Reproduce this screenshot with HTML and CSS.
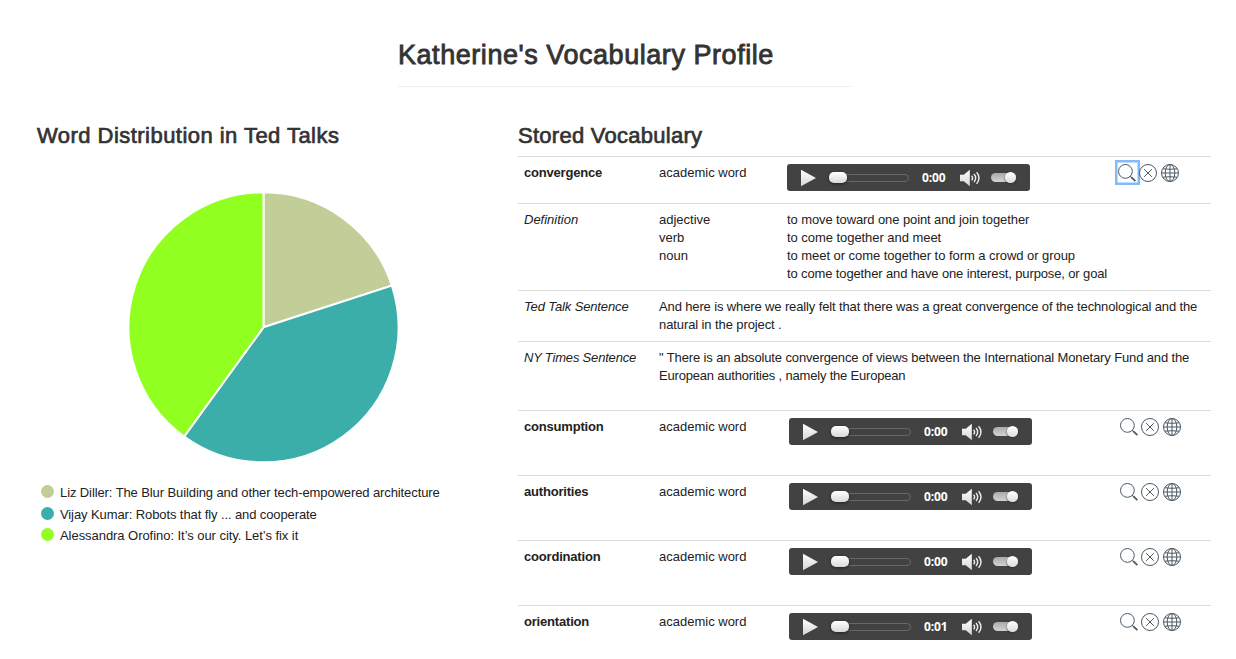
FILE: index.html
```html
<!DOCTYPE html>
<html lang="en">
<head>
<meta charset="utf-8">
<title>Katherine's Vocabulary Profile</title>
<link rel="stylesheet" href="styles.css">
</head>
<body>
<svg class="defs" aria-hidden="true">
  <defs>
    <linearGradient id="knob" x1="0" y1="0" x2="0" y2="1"><stop offset="0" stop-color="#fff"/><stop offset="1" stop-color="#d6d6d6"/></linearGradient>
    <symbol id="play" viewBox="0 0 16 18"><path d="M1 .8v16.4L16 9z" fill="url(#knob)"/></symbol>
    <symbol id="speaker" viewBox="0 0 22 18">
      <path d="M1 5.8h3.8L10.8.8v16.4l-6-5H1z" fill="url(#knob)"/>
      <path d="M12.6 6.7q2 2.3 0 4.6M15 5q3.4 4 0 8M17.6 3.3q4.8 5.7 0 11.4" fill="none" stroke="#eee" stroke-width="1.4"/>
    </symbol>
    <symbol id="search" viewBox="0 0 20 20"><circle cx="8.4" cy="8.4" r="6.9"/><path d="M13 13.2l2 1.8"/><path d="M14.2 14.2l4.2 4" stroke-width="1.8"/></symbol>
    <symbol id="close" viewBox="0 0 20 20"><circle cx="10" cy="10" r="8.5"/><path d="M6.1 6.1l7.8 7.8M13.9 6.1l-7.8 7.8"/></symbol>
    <symbol id="globe" viewBox="0 0 20 20"><circle cx="10" cy="10" r="8.5"/><ellipse cx="10" cy="10" rx="4.8" ry="8.5"/><path d="M10 1.4v17.2M1.4 10h17.2M2.8 5.8q7.2 1 14.4 0M2.8 14.2q7.2-1 14.4 0"/></symbol>
  </defs>
</svg>
<header class="page-header"><h1>Katherine's Vocabulary Profile</h1></header>
<main class="columns">
  <section class="chart">
    <h2 class="chart-title">Word Distribution in Ted Talks</h2>
    <svg class="pie" viewBox="-134.5 -134.3 270 270">
      <path d="M0 0V-135A135 135 0 0 1 128.39 -41.72Z" fill="#c1ce98"/>
      <path d="M0 0L128.39 -41.72A135 135 0 0 1 -79.35 109.22Z" fill="#3caea9"/>
      <path d="M0 0L-79.35 109.22A135 135 0 0 1 0 -135Z" fill="#91ff1f"/>
    </svg>
    <ul class="legend">
      <li><i class="dot sand"></i><span class="snug">Liz Diller: The Blur Building and other tech-empowered architecture</span></li>
      <li><i class="dot teal"></i><span class="snug second">Vijay Kumar: Robots that fly ... and cooperate</span></li>
      <li><i class="dot lime"></i><span class="slight">Alessandra Orofino: It’s our city. Let’s fix it</span></li>
    </ul>
  </section>
  <section class="vocab">
    <h2 class="vocab-title">Stored Vocabulary</h2>
    <div class="row word first">
      <b>convergence</b><span>academic word</span>
      <div class="player"><svg class="play"><use href="#play"/></svg><span class="track"><i></i></span><span class="time">0:00</span><svg class="speaker"><use href="#speaker"/></svg><span class="volume"><i></i></span></div>
      <div class="actions"><span class="icon focus"><svg><use href="#search"/></svg></span><svg><use href="#close"/></svg><svg><use href="#globe"/></svg></div>
    </div>
    <div class="row">
      <em>Definition</em>
      <span>adjective<br>verb<br>noun</span>
      <span class="meaning"><span class="snug">to move toward one point and join together</span><br><span class="slight">to come together and meet</span><br><span class="slight">to meet or come together to form a crowd or group</span><br><span class="tight">to come together and have one interest, purpose, or goal</span></span>
    </div>
    <div class="row">
      <em class="tight">Ted Talk Sentence</em>
      <span class="sentence"><span class="tight">And here is where we really felt that there was a great convergence of the technological and the</span><br><span class="snug">natural in the project .</span></span>
    </div>
    <div class="row last-detail">
      <em class="tighter">NY Times Sentence</em>
      <span class="sentence"><span class="tight">" There is an absolute convergence of views between the International Monetary Fund and the</span><br><span class="tighter">European authorities , namely the European</span></span>
    </div>
    <div class="row word">
      <b>consumption</b><span>academic word</span>
      <div class="player"><svg class="play"><use href="#play"/></svg><span class="track"><i></i></span><span class="time">0:00</span><svg class="speaker"><use href="#speaker"/></svg><span class="volume"><i></i></span></div>
      <div class="actions"><span class="icon"><svg><use href="#search"/></svg></span><svg><use href="#close"/></svg><svg><use href="#globe"/></svg></div>
    </div>
    <div class="row word">
      <b>authorities</b><span>academic word</span>
      <div class="player"><svg class="play"><use href="#play"/></svg><span class="track"><i></i></span><span class="time">0:00</span><svg class="speaker"><use href="#speaker"/></svg><span class="volume"><i></i></span></div>
      <div class="actions"><span class="icon"><svg><use href="#search"/></svg></span><svg><use href="#close"/></svg><svg><use href="#globe"/></svg></div>
    </div>
    <div class="row word">
      <b>coordination</b><span>academic word</span>
      <div class="player"><svg class="play"><use href="#play"/></svg><span class="track"><i></i></span><span class="time">0:00</span><svg class="speaker"><use href="#speaker"/></svg><span class="volume"><i></i></span></div>
      <div class="actions"><span class="icon"><svg><use href="#search"/></svg></span><svg><use href="#close"/></svg><svg><use href="#globe"/></svg></div>
    </div>
    <div class="row word">
      <b>orientation</b><span>academic word</span>
      <div class="player"><svg class="play"><use href="#play"/></svg><span class="track"><i></i></span><span class="time">0:01</span><svg class="speaker"><use href="#speaker"/></svg><span class="volume"><i></i></span></div>
      <div class="actions"><span class="icon"><svg><use href="#search"/></svg></span><svg><use href="#close"/></svg><svg><use href="#globe"/></svg></div>
    </div>
  </section>
</main>
</body>
</html>
```
FILE: styles.css
```css
* { box-sizing: border-box; }
html, body { height: 100%; }
body {
  margin: 0;
  overflow: hidden;
  background: #fff;
  color: #222;
  font: 13px/18px "Liberation Sans", Arial, sans-serif;
}
.defs { display: block; width: 0; height: 0; }
h1, h2 { margin: 0; color: #333; font-weight: 400; -webkit-text-stroke: .85px #333; white-space: nowrap; }
.page-header {
  width: 453px;
  height: 87px;
  margin-left: 398px;
  padding-top: 38px;
  border-bottom: 1px solid #eee;
}
h1 { font-size: 27px; line-height: 34px; letter-spacing: .55px; }
h2 { font-size: 22px; line-height: 28px; -webkit-text-stroke-width: .7px; }
.chart-title { letter-spacing: .46px; }
.vocab-title { letter-spacing: .27px; }
.slight { letter-spacing: -.05px; }
.snug { letter-spacing: -.1px; }
.tight { letter-spacing: -.13px; }
.tighter { letter-spacing: -.19px; }
.columns { display: flex; padding: 35px 25px 0 37px; }
.chart { width: 481px; flex: none; }
.pie { display: block; width: 270px; height: 270px; margin: 43px 0 0 92px; }
.pie path { stroke: #fff; stroke-width: 2; }
.legend { list-style: none; margin: 19px 0 0 4px; padding: 0; }
.legend li { display: flex; align-items: center; height: 21.5px; gap: 6px; white-space: nowrap; }
.second { padding-top: 1px; }
.dot { width: 13px; height: 13px; margin-bottom: 2px; border-radius: 50%; }
.sand { background: #c1ce98; }
.teal { background: #3caea9; }
.lime { background: #91ff1f; }
.vocab { width: 693px; flex: none; }
.vocab-title { height: 34px; }
.row {
  display: grid;
  grid-template-columns: 135px 128px 328px 1fr;
  align-items: start;
  padding: 7px 0 7px 6px;
  border-top: 1px solid #ddd;
  white-space: nowrap;
}
.row b { letter-spacing: -.19px; }
.sentence { grid-column: 2 / -1; }
.last-detail { padding-bottom: 25px; }
.word { height: 65px; }
.word.first { height: 47px; }
.player {
  display: flex;
  align-items: center;
  width: 243px;
  height: 27px;
  margin-left: 2px;
  padding-left: 13px;
  background: #424242;
  border-radius: 3px;
}
.first .player { margin-left: 0; }
.play { width: 16px; height: 18px; }
.track { width: 80px; height: 8px; margin-left: 13px; border: 1px solid #686868; border-radius: 4px; display: flex; align-items: center; }
.track i { width: 18px; height: 11px; margin-left: -1px; border-radius: 5px; background: linear-gradient(#fff, #d9d9d9); box-shadow: 0 1px 3px #222; flex: none; }
.time { width: 26px; margin-left: 13px; color: #fff; font: bold 12px/18px "Open Sans", sans-serif; letter-spacing: -.1px; }
.speaker { width: 22px; height: 18px; margin-left: 11px; }
.volume { width: 25px; height: 9px; margin-left: 10px; border-radius: 5px; background: linear-gradient(#aaa, #d3d3d3); display: flex; align-items: center; justify-content: flex-end; }
.volume i { width: 11px; height: 11px; border-radius: 50%; background: linear-gradient(#fff, #ddd); box-shadow: 0 1px 2px #333; }
.actions { display: flex; margin-left: 4px; gap: 2px; }
.actions svg { display: block; width: 20px; height: 20px; margin-top: -1px; fill: none; stroke: #4b5a64; stroke-width: 1; }
.first .actions { margin-left: 2px; }
.icon { width: 19px; }
.focus { outline: 2px solid #83baf9; width: 21px; height: 21px; margin: -2px -2px 0 0; padding-top: 2px; box-shadow: inset 0 0 0 .5px #83baf9; }
```
